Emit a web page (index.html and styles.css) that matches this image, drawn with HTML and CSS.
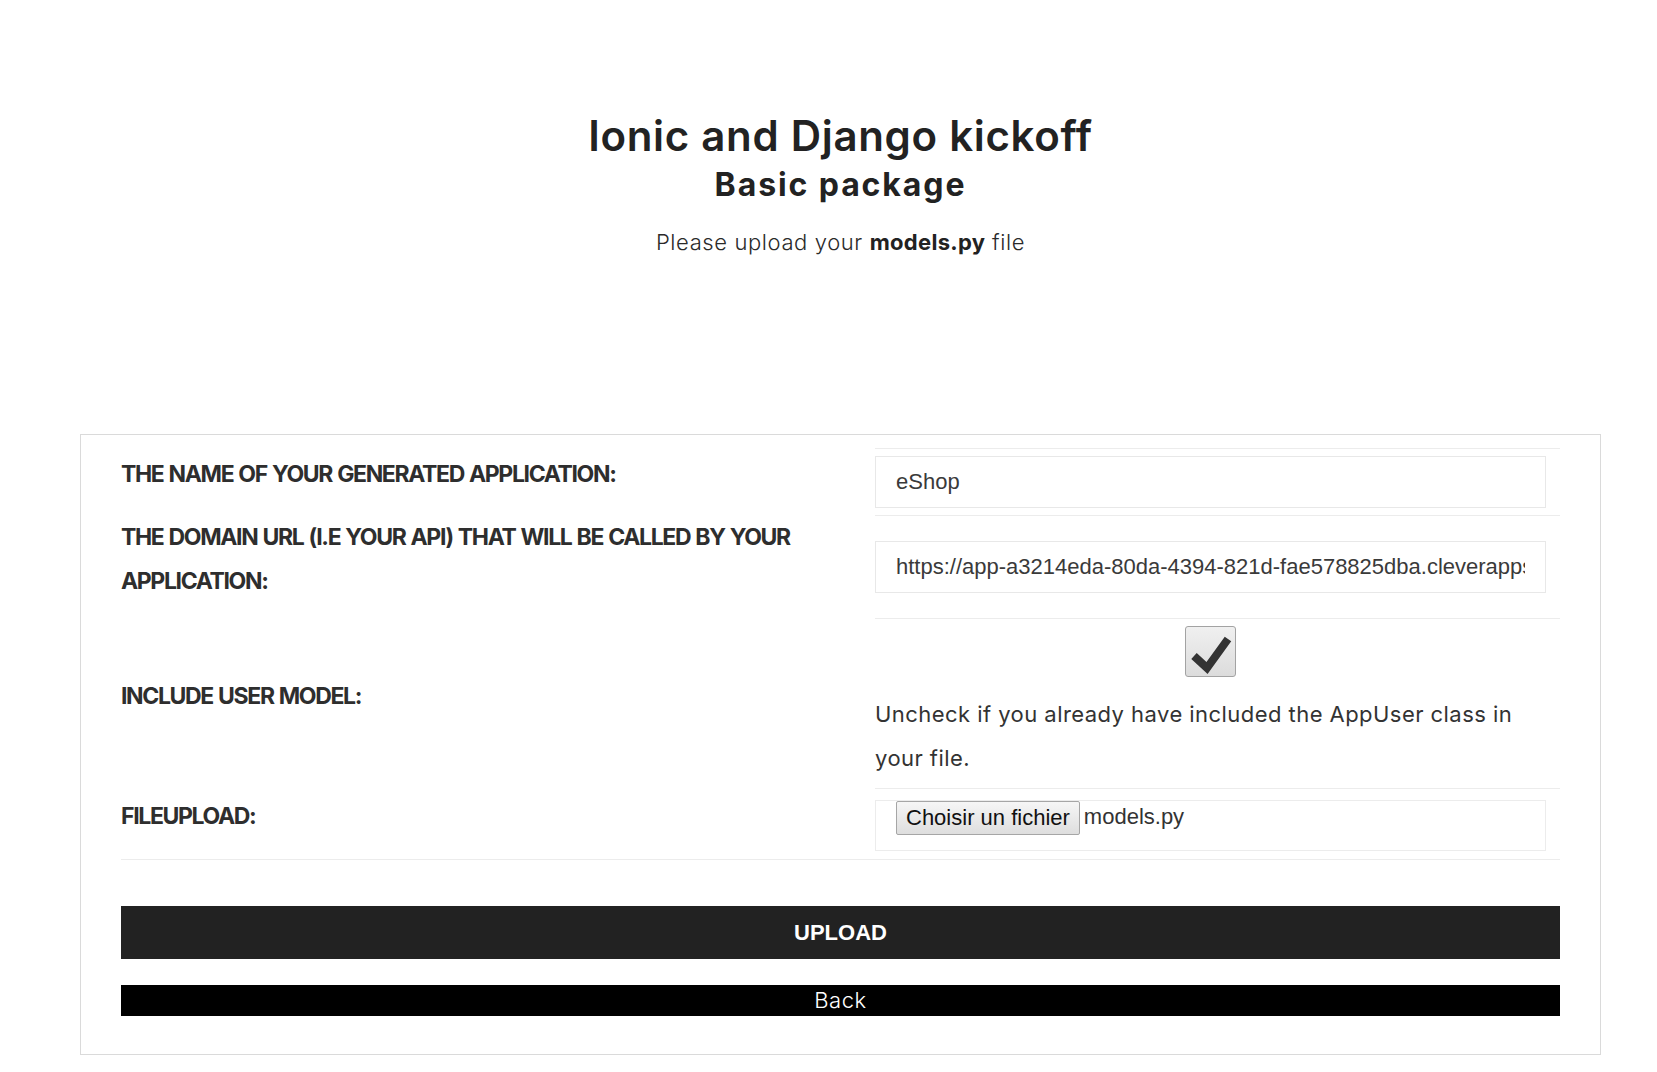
FILE: index.html
```html
<!DOCTYPE html>
<html lang="en">
<head>
<meta charset="utf-8">
<title>Ionic and Django kickoff</title>
<link rel="stylesheet" href="styles.css">
</head>
<body>
<div class="page">
  <header class="hero">
    <h1 class="title">Ionic and Django kickoff</h1>
    <h2 class="subtitle">Basic package</h2>
    <p class="lead">Please upload your <strong>models.py</strong> file</p>
  </header>

  <form class="card" onsubmit="return false;">
    <div class="fields">
      <div class="label">The name of your generated application:</div>
      <div class="field">
        <input class="input" type="text" value="eShop">
      </div>

      <div class="label">The domain URL (I.E your API) that will be called by your application:</div>
      <div class="field">
        <input class="input" type="text" value="https://app-a3214eda-80da-4394-821d-fae578825dba.cleverapps.io">
      </div>

      <div class="label">Include user model:</div>
      <div class="field field-check">
        <div class="check-wrap">
          <span class="checkbox">
            <svg viewBox="0 0 49 49" width="49" height="49" aria-hidden="true">
              <polyline points="8,29 21,41 42,12" fill="none" stroke="#333" stroke-width="8" stroke-linejoin="miter" stroke-linecap="butt"/>
            </svg>
          </span>
          <p class="hint">Uncheck if you already have included the AppUser class in your file.</p>
        </div>
      </div>

      <div class="label">Fileupload:</div>
      <div class="field field-file">
        <div class="file-box">
          <span class="file-btn">Choisir un fichier</span><span class="file-name">models.py</span>
        </div>
      </div>
    </div>

    <button class="upload" type="submit">UPLOAD</button>
    <a class="back" href="#">Back</a>
  </form>
</div>
</body>
</html>
```

FILE: styles.css
```css
html, body {
  margin: 0;
  padding: 0;
  background: #fff;
}

body {
  font-family: Inter, "Noto Sans", sans-serif;
  color: #333;
}

.page {
  width: 1521px;
  margin-left: 80px;
}

.hero {
  text-align: center;
  padding-top: 111px;
}

.title {
  margin: 0;
  font-size: 42px;
  line-height: 50px;
  font-weight: 600;
  letter-spacing: 0.7px;
  color: #222;
}

.subtitle {
  margin: 4px 0 0;
  font-size: 32px;
  line-height: 40px;
  font-weight: 700;
  letter-spacing: 1.9px;
  color: #222;
}

.lead {
  margin: 22px 0 0;
  font-size: 22px;
  line-height: 30px;
  font-weight: 300;
  letter-spacing: 0.6px;
  color: #2a2a2a;
}

.lead strong {
  font-weight: 700;
  letter-spacing: 0.3px;
  color: #222;
}

.card {
  margin-top: 177px;
  box-sizing: border-box;
  border: 1px solid #dadada;
  padding: 13px 40px 38px;
}

.fields {
  display: grid;
  grid-template-columns: 754px 1fr;
  border-bottom: 1px solid #ececec;
}

.label {
  display: flex;
  align-items: center;
  padding-bottom: 15px;
  max-width: 700px;
  font-size: 23px;
  line-height: 44px;
  font-weight: 700;
  letter-spacing: -1.35px;
  word-spacing: 1px;
  text-transform: uppercase;
  color: #2e2e2e;
}

.field {
  border-top: 1px solid #ececec;
  padding: 7px 0;
  display: flex;
  flex-direction: column;
  justify-content: center;
}

.input {
  box-sizing: border-box;
  width: 98%;
  height: 52px;
  margin: 0;
  padding: 0 20px;
  border: 1px solid #e8e8e8;
  border-radius: 0;
  background: #fff;
  font-family: "Liberation Sans", Arial, sans-serif;
  font-size: 22px;
  color: #3a3a3a;
  outline: none;
}

.field-check {
  justify-content: flex-start;
  padding: 7px 0 8px;
}

.check-wrap {
  width: 98%;
  display: flex;
  flex-direction: column;
}

.checkbox {
  align-self: center;
  box-sizing: border-box;
  width: 51px;
  height: 51px;
  margin-bottom: 15px;
  border: 1px solid #a3a3a3;
  border-radius: 3px;
  background: linear-gradient(#f0f0f0, #dcdcdc);
  display: flex;
}

.hint {
  margin: 0;
  font-size: 22px;
  line-height: 44px;
  font-weight: 400;
  letter-spacing: 0.45px;
  color: #333;
}

.field-file {
  padding: 11px 0 8px;
}

.file-box {
  box-sizing: border-box;
  width: 98%;
  height: 51px;
  padding: 0 20px;
  border: 1px solid #ececec;
  display: flex;
  align-items: flex-start;
  font-family: "Liberation Sans", Arial, sans-serif;
  font-size: 22px;
}

.file-btn {
  box-sizing: border-box;
  height: 34px;
  padding: 0 9px;
  line-height: 32px;
  border: 1px solid #a6a6a6;
  border-radius: 2px;
  background: linear-gradient(#f6f6f6, #dedede);
  color: #111;
  white-space: nowrap;
}

.file-name {
  margin-left: 4px;
  line-height: 32px;
  color: #333;
}

.upload {
  display: block;
  width: 100%;
  height: 53px;
  margin: 46px 0 0;
  padding: 0;
  border: 0;
  background: #222;
  color: #fff;
  font-family: "Liberation Sans", Arial, sans-serif;
  font-size: 22px;
  font-weight: 700;
  cursor: pointer;
}

.back {
  display: block;
  height: 31px;
  margin-top: 26px;
  background: #000;
  color: #fff;
  text-align: center;
  text-decoration: none;
  font-size: 22px;
  line-height: 31px;
  font-weight: 300;
  letter-spacing: 0.6px;
}
```
